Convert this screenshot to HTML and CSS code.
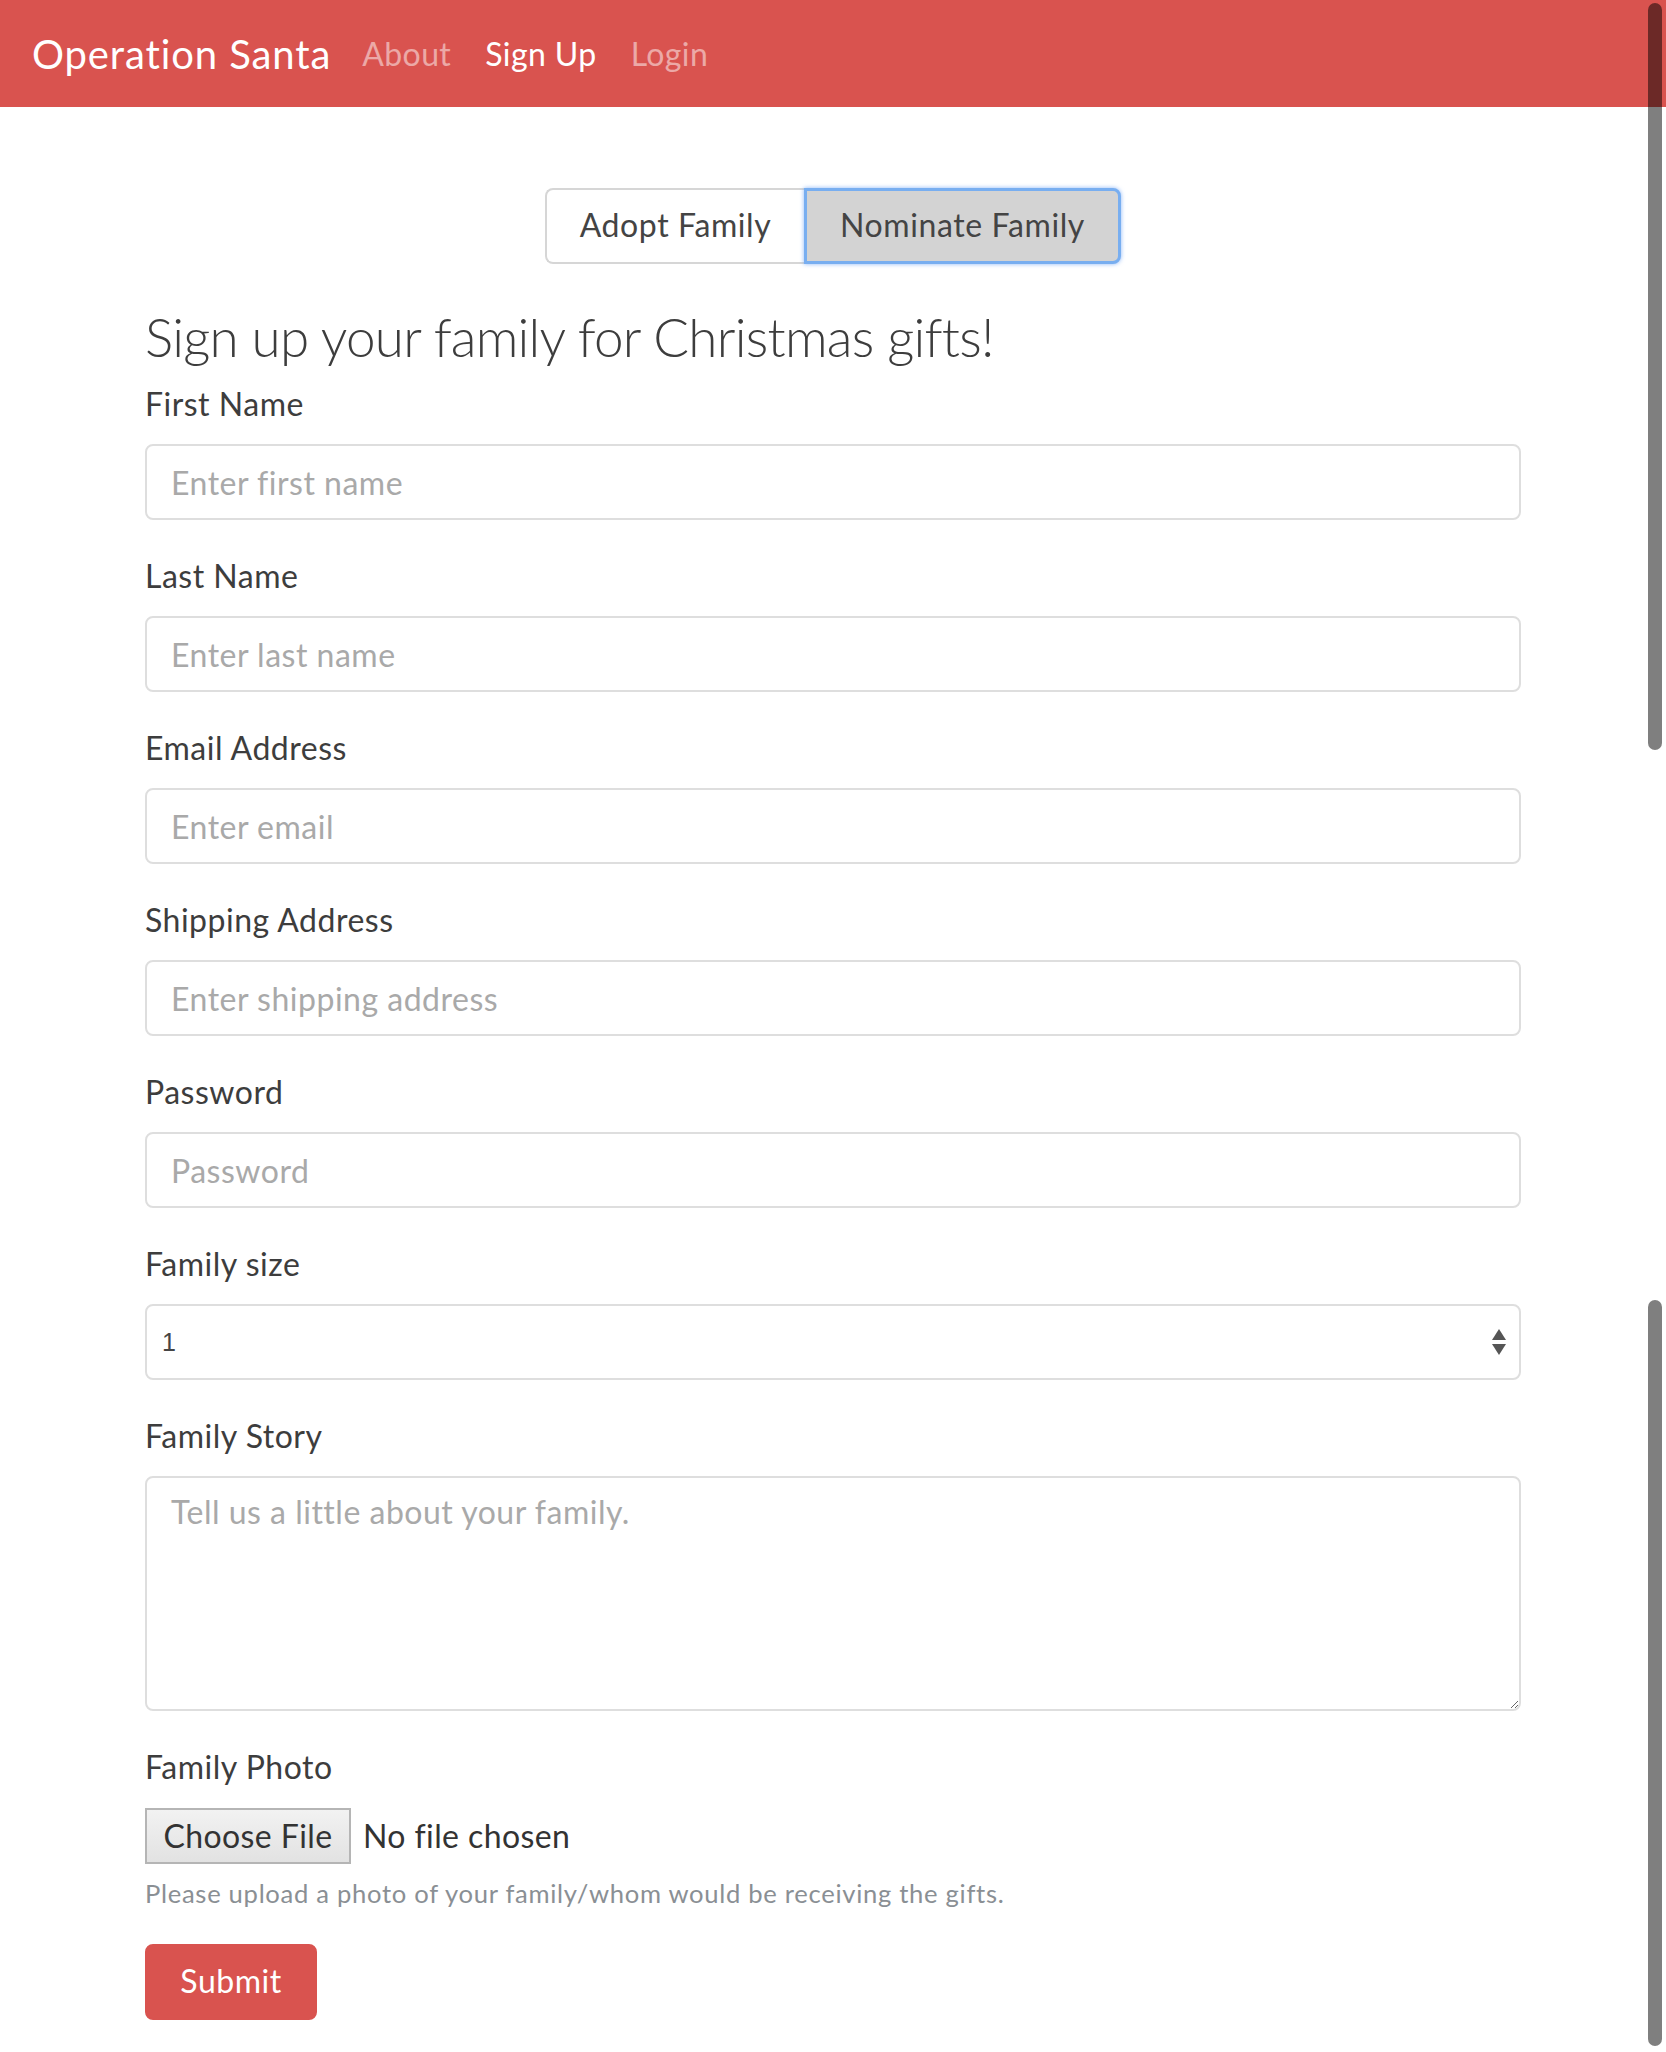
FILE: index.html
```html
<!DOCTYPE html>
<html lang="en">
<head>
<meta charset="utf-8">
<title>Operation Santa</title>
<link rel="stylesheet" href="styles.css">
</head>
<body>
<nav class="navbar">
  <a class="brand" href="#">Operation Santa</a>
  <ul class="nav">
    <li><a class="nav-link" href="#">About</a></li>
    <li><a class="nav-link active" href="#">Sign Up</a></li>
    <li><a class="nav-link" href="#">Login</a></li>
  </ul>
</nav>

<main class="container">
  <div class="toggle-row">
    <div class="btn-group">
      <button class="toggle-btn" type="button">Adopt Family</button>
      <button class="toggle-btn toggle-active" type="button">Nominate Family</button>
    </div>
  </div>

  <h3 class="title">Sign up your family for Christmas gifts!</h3>

  <form class="form">
    <div class="form-group">
      <label class="label">First Name</label>
      <input class="control" type="text" placeholder="Enter first name">
    </div>
    <div class="form-group">
      <label class="label">Last Name</label>
      <input class="control" type="text" placeholder="Enter last name">
    </div>
    <div class="form-group">
      <label class="label">Email Address</label>
      <input class="control" type="email" placeholder="Enter email">
    </div>
    <div class="form-group">
      <label class="label">Shipping Address</label>
      <input class="control" type="text" placeholder="Enter shipping address">
    </div>
    <div class="form-group">
      <label class="label">Password</label>
      <input class="control" type="password" placeholder="Password">
    </div>
    <div class="form-group">
      <label class="label">Family size</label>
      <div class="select">
        <span class="select-value">1</span>
        <svg class="select-arrows" width="16" height="28" viewBox="0 0 16 28" aria-hidden="true">
          <path d="M8 1 L15 12 L1 12 Z" fill="#555"/>
          <path d="M1 16 L15 16 L8 27 Z" fill="#555"/>
        </svg>
      </div>
    </div>
    <div class="form-group">
      <label class="label">Family Story</label>
      <textarea class="control textarea" placeholder="Tell us a little about your family."></textarea>
    </div>
    <div class="form-group">
      <label class="label">Family Photo</label>
      <div class="file">
        <span class="file-btn">Choose File</span>
        <span class="file-name">No file chosen</span>
      </div>
      <small class="help">Please upload a photo of your family/whom would be receiving the gifts.</small>
    </div>
    <button class="submit" type="button">Submit</button>
  </form>
</main>

<div class="scrollbar scrollbar-top"></div>
<div class="scrollbar scrollbar-bottom"></div>
</body>
</html>
```

FILE: styles.css
```css
html, body {
  margin: 0;
  padding: 0;
}
body {
  font-family: "Lato", "Open Sans", sans-serif;
  color: #3d3d3d;
  background: #fff;
  height: 2052px;
  overflow: hidden;
  position: relative;
}

/* navbar */
.navbar {
  height: 107px;
  background: #d9534f;
  display: flex;
  align-items: center;
  padding: 0 32px;
  box-sizing: border-box;
}
.brand {
  color: #fff;
  font-size: 40px;
  text-decoration: none;
  letter-spacing: 0.9px;
  margin-right: 14px;
}
.nav {
  list-style: none;
  display: flex;
  margin: 0;
  padding: 0;
}
.nav-link {
  display: block;
  padding: 0 17px;
  font-size: 32px;
  color: rgba(255, 255, 255, 0.5);
  text-decoration: none;
  letter-spacing: 0.4px;
}
.nav-link.active {
  color: #fff;
}

/* container */
.container {
  width: 1376px;
  margin: 0 auto;
  padding: 81px 0 0;
}

.toggle-row {
  display: flex;
  justify-content: center;
}
.btn-group {
  display: flex;
}
.toggle-btn {
  font-family: inherit;
  font-size: 32px;
  height: 76px;
  padding: 0 0 3px;
  color: #444;
  background: #fff;
  border: 2px solid #d6d6d6;
  letter-spacing: 0.6px;
  cursor: pointer;
}
.toggle-btn:first-child {
  border-radius: 8px 0 0 8px;
  border-right: none;
  width: 259px;
}
.toggle-btn.toggle-active {
  background: #d3d3d3;
  border: 3px solid #78aef0;
  border-radius: 0 8px 8px 0;
  box-shadow: 0 0 4px rgba(40, 120, 240, 0.55);
  width: 317px;
}

.title {
  font-size: 53px;
  font-weight: 300;
  line-height: 67px;
  margin: 39px 0 10px;
  color: #3d3d3d;
  letter-spacing: -0.75px;
}

/* form */
.form-group {
  margin-bottom: 32px;
}
.label {
  display: block;
  font-size: 32px;
  line-height: 48px;
  margin-bottom: 16px;
  color: #3d3d3d;
  letter-spacing: 0.5px;
}
.control {
  display: block;
  width: 100%;
  box-sizing: border-box;
  height: 76px;
  padding: 0 24px;
  font-family: inherit;
  font-size: 32px;
  color: #444;
  border: 2px solid #dedede;
  border-radius: 8px;
  background: #fff;
  letter-spacing: 0.5px;
  outline: none;
}
.control::placeholder {
  color: #a9a9a9;
  opacity: 1;
}
.textarea {
  height: 235px;
  padding: 10px 24px;
  line-height: 48px;
  resize: vertical;
}

.select {
  display: flex;
  align-items: center;
  justify-content: space-between;
  height: 76px;
  box-sizing: border-box;
  border: 2px solid #dedede;
  border-radius: 8px;
  padding: 0 12px 0 15px;
}
.select-value {
  font-family: "Liberation Sans", Arial, sans-serif;
  font-size: 25px;
  color: #444;
}
.select-arrows {
  display: block;
}

.file {
  display: flex;
  align-items: center;
  height: 58px;
}
.file-btn {
  display: flex;
  align-items: center;
  justify-content: center;
  box-sizing: border-box;
  width: 206px;
  height: 56px;
  padding-bottom: 2px;
  font-size: 32px;
  color: #333;
  background: linear-gradient(#f2f2f2, #e2e2e2);
  border: 2px solid #b5b5b5;
  letter-spacing: 0.4px;
}
.file-name {
  margin-left: 12px;
  padding-bottom: 2px;
  font-size: 32px;
  color: #333;
  letter-spacing: 0.4px;
}
.help {
  display: block;
  margin-top: 9px;
  font-size: 25.6px;
  line-height: 38px;
  color: #8a8f94;
  letter-spacing: 0.7px;
}

.submit {
  display: block;
  height: 76px;
  width: 172px;
  padding: 0 0 3px;
  font-family: inherit;
  font-size: 32px;
  color: #fff;
  background: #d9534f;
  border: 2px solid #d9534f;
  border-radius: 8px;
  letter-spacing: 0.5px;
  cursor: pointer;
}

/* overlay scrollbars */
.scrollbar {
  position: absolute;
  right: 4px;
  width: 14px;
  border-radius: 7px;
  background: rgba(0, 0, 0, 0.5);
}
.scrollbar-top {
  top: 3px;
  height: 747px;
}
.scrollbar-bottom {
  top: 1300px;
  height: 746px;
}
```
